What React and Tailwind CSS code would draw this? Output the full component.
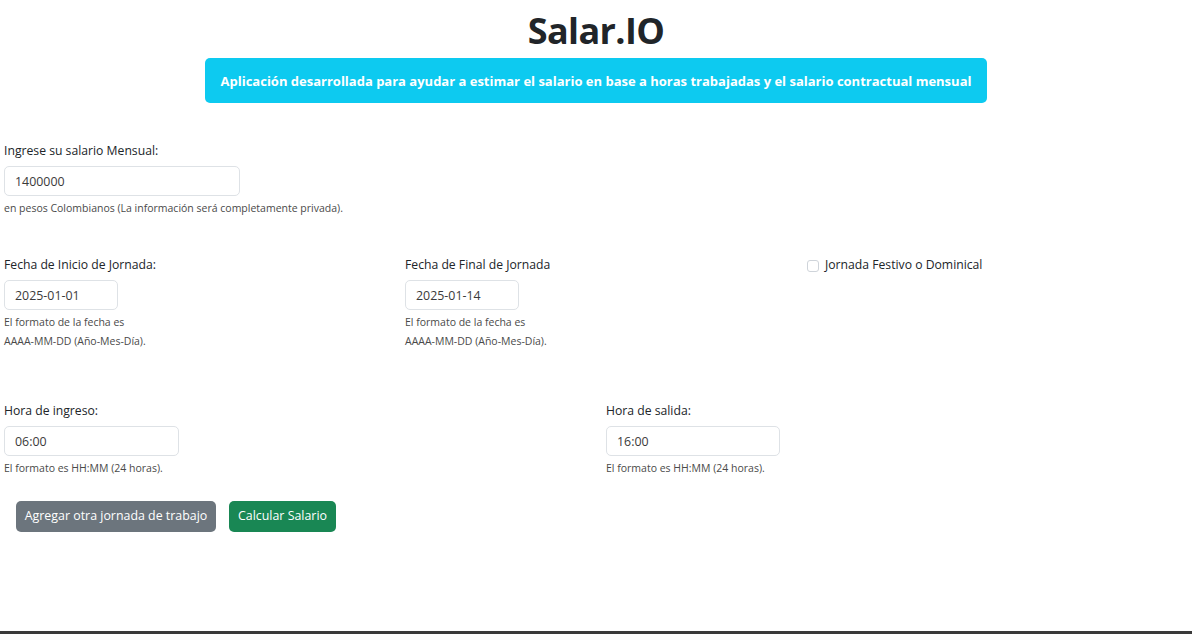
/**
 * Salar.IO
 * Formulario para estimar el salario por horas trabajadas.
 */
function Field({ label, value, width, help }) {
    return (
        <div>
            <label className="block text-[12.2px] leading-[19px] text-[#212529] mb-[6px]">{label}</label>
            <input
                type="text"
                defaultValue={value}
                className={`${width} h-[30px] border border-[#dee2e6] rounded-[5px] px-[10px] text-[12.4px] text-[#3a3a3a] bg-white outline-none`}
            />
            <div className="mt-[3px] text-[10.5px] leading-[19px] text-[#4a4a4a]">
                {help.map((line) => (
                    <div key={line}>{line}</div>
                ))}
            </div>
        </div>
    );
}

export default function App() {
    return (
        <div className="min-h-[634px] bg-white flex flex-col font-['Open_Sans',sans-serif] text-[#212529]">
            <div className="flex-1">
                {/* Header */}
                <div className="flex flex-col items-center pt-[8px]">
                    <h1 className="text-[36px] leading-[46px] font-bold tracking-[-0.6px] text-[#212529]">Salar.IO</h1>
                    <div className="mt-[4px] w-[782px] h-[45px] rounded-[5px] bg-[#0dcaf0] flex items-center justify-center">
                        <p className="text-[13px] font-bold text-white pt-[2px]">
                            Aplicación desarrollada para ayudar a estimar el salario en base a horas trabajadas y el salario contractual mensual
                        </p>
                    </div>
                </div>

                {/* Salario */}
                <div className="pl-[4px] mt-[38px]">
                    <Field
                        label="Ingrese su salario Mensual:"
                        value="1400000"
                        width="w-[236px]"
                        help={['en pesos Colombianos (La información será completamente privada).']}
                    />
                </div>

                {/* Fechas */}
                <div className="grid grid-cols-[401px_402px_1fr] pl-[4px] mt-[37px]">
                    <Field
                        label="Fecha de Inicio de Jornada:"
                        value="2025-01-01"
                        width="w-[114px]"
                        help={['El formato de la fecha es', 'AAAA-MM-DD (Año-Mes-Día).']}
                    />
                    <Field
                        label="Fecha de Final de Jornada"
                        value="2025-01-14"
                        width="w-[114px]"
                        help={['El formato de la fecha es', 'AAAA-MM-DD (Año-Mes-Día).']}
                    />
                    <label className="flex items-center gap-[6px] h-[19px] mt-[1px] text-[12.2px]">
                        <span className="w-[12px] h-[12px] border border-[#cfd4da] rounded-[3px] bg-white" />
                        Jornada Festivo o Dominical
                    </label>
                </div>

                {/* Horas */}
                <div className="grid grid-cols-[602px_1fr] pl-[4px] mt-[50px]">
                    <Field label="Hora de ingreso:" value="06:00" width="w-[175px]" help={['El formato es HH:MM (24 horas).']} />
                    <Field label="Hora de salida:" value="16:00" width="w-[174px]" help={['El formato es HH:MM (24 horas).']} />
                </div>

                {/* Botones */}
                <div className="flex gap-[13px] pl-[16px] mt-[23px]">
                    <button className="h-[31px] w-[200px] rounded-[5px] bg-[#6c757d] text-white text-[12.4px]">
                        Agregar otra jornada de trabajo
                    </button>
                    <button className="h-[31px] w-[107px] rounded-[5px] bg-[#198754] text-white text-[12.4px]">
                        Calcular Salario
                    </button>
                </div>
            </div>
            <div className="h-[3px] bg-[#3a3a3a]" />
        </div>
    );
}
